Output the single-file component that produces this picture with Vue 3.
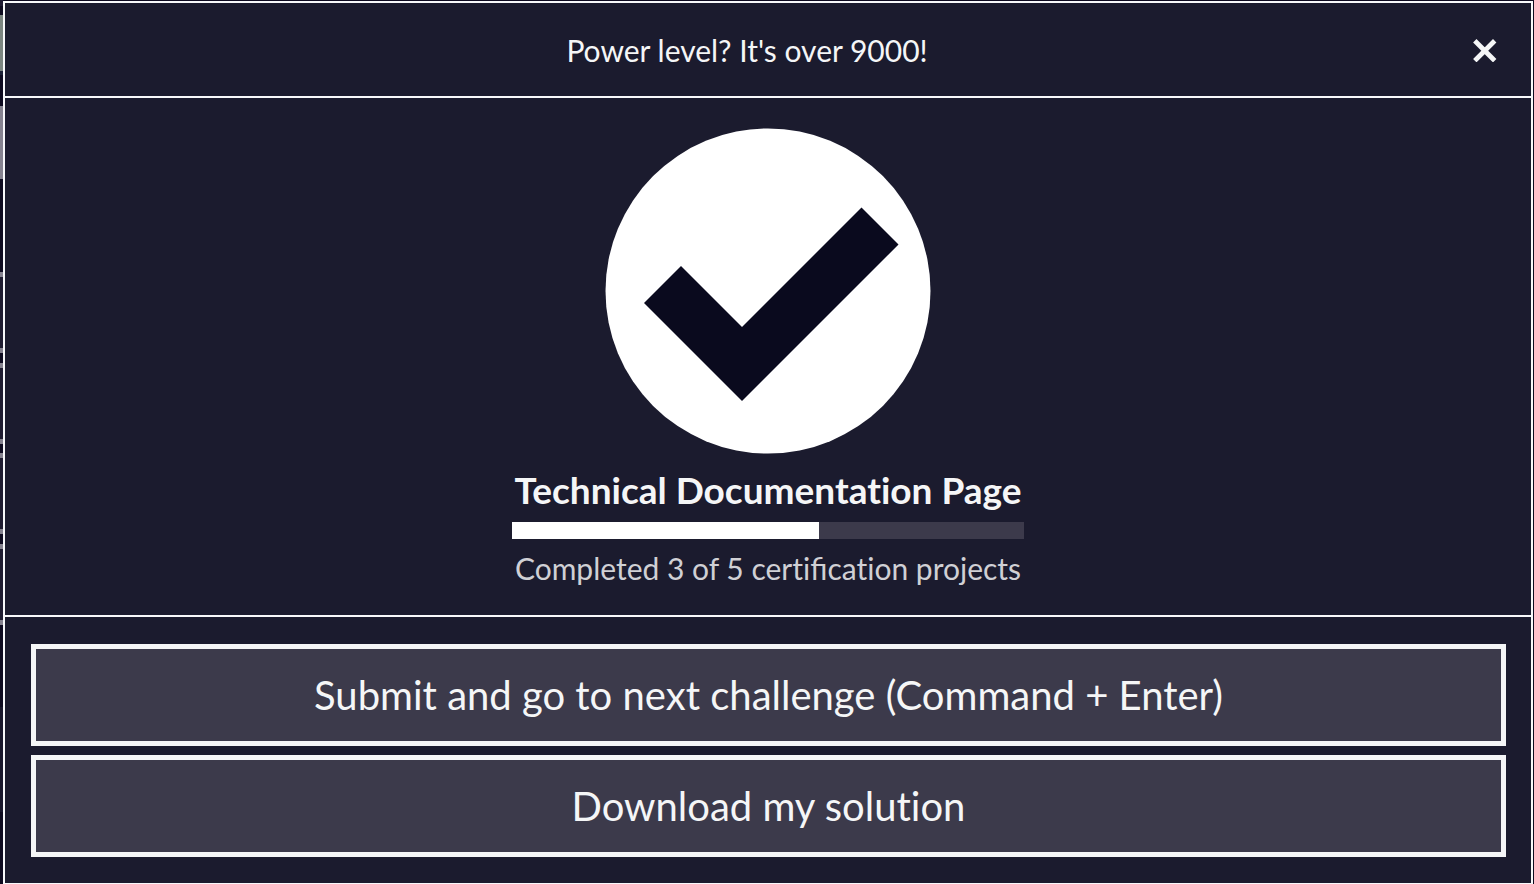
<script setup>
const completed = 3
const total = 5
</script>

<template>
  <div class="page">
    <section class="modal" role="dialog" aria-labelledby="modal-title">
      <header class="header">
        <h2 id="modal-title" class="title">Power level? It's over 9000!</h2>
        <button class="close" type="button" aria-label="Close">
          <svg viewBox="0 0 24 24" width="24" height="24" aria-hidden="true">
            <path d="M3.500 4.500 20 21M20 4.500 3.500 21" fill="none" stroke="#f5f6f7" stroke-width="4.800" stroke-linecap="square" />
          </svg>
        </button>
      </header>
      <div class="body">
        <svg class="badge" viewBox="0 0 326 326" aria-hidden="true">
          <circle cx="163" cy="163" r="162.5" fill="#fff" />
          <path d="M39 175 76 138 137 199 256.500 79.500 293.500 116.500 137 273Z" fill="#0a0a1e" />
        </svg>
        <div class="progress">
          <h3 class="challenge">Technical Documentation Page</h3>
          <div class="track">
            <div class="fill" :style="{ width: (completed / total) * 100 + '%' }"></div>
          </div>
          <p class="status">Completed {{ completed }} of {{ total }} certi<span class="ligature">fi</span>cation projects</p>
        </div>
      </div>
      <footer class="footer">
        <button class="action" type="button">Submit and go to next challenge (Command + Enter)</button>
        <button class="action" type="button">Download my solution</button>
      </footer>
    </section>
  </div>
</template>

<style>
body {
  background: #0e0b20;
}
</style>

<style scoped>
.page {
  box-sizing: border-box;
  height: 100vh;
  overflow: hidden;
  padding: 1px 1px 0 3px;
  font-family: Lato, "Liberation Sans", sans-serif;
  font-variant-ligatures: none;
  color: #f5f6f7;
  /* dimmed page showing along the dialog's edges */
  background: linear-gradient(
    #1f1b33 0 6px, #0e0b20 6px 15px, #7b8580 15px 71px, #1b2036 71px 75px,
    #0e0b20 75px 106px, #85828f 106px 179px, #0e0b20 179px 272px,
    #85828f 272px 277px, #1f1c31 277px 348px, #85828f 348px 353px,
    #0e0b20 353px 363px, #85828f 363px 368px, #1f1c31 368px 439px,
    #85828f 439px 444px, #0e0b20 444px 453px, #85828f 453px 458px,
    #1f1c31 458px 529px, #85828f 529px 534px, #0e0b20 534px 544px,
    #85828f 544px 549px, #1f1c31 549px 620px, #85828f 620px 625px,
    #0e0b20 625px 707px, #19172c 707px 812px, #0e0b20 812px
  ) left / 3px 100% no-repeat;
}
.modal {
  border: 2px solid #f8f9fb;
  background: #1b1b2e;
}
.header {
  display: flex;
  align-items: center;
  height: 93px;
  padding: 0 25px;
  border-bottom: 2px solid #f8f9fb;
}
.title {
  flex: 1;
  margin: 0;
  font-size: 30px;
  line-height: 44px;
  font-weight: 400;
  text-align: center;
}
.close {
  display: flex;
  justify-content: center;
  width: 42px;
  padding: 0;
  border: 0;
  background: none;
}
.body {
  display: flex;
  flex-direction: column;
  align-items: center;
  padding: 30px 30px 25px;
  border-bottom: 2px solid #f8f9fb;
}
.badge {
  width: 326px;
  height: 326px;
}
.progress {
  width: 512px;
}
.challenge {
  margin: 11px 0 7px;
  font-size: 37px;
  line-height: 50px;
  font-weight: 700;
  text-align: center;
  white-space: nowrap;
}
.track {
  height: 17px;
  background: #3c3a4b;
}
.fill {
  height: 100%;
  background: #fff;
}
.status {
  margin: 7px 0 0;
  font-size: 30px;
  line-height: 44px;
  text-align: center;
  color: #d0d0d5;
  white-space: nowrap;
}
.ligature {
  font-variant-ligatures: common-ligatures;
}
.footer {
  display: flex;
  flex-direction: column;
  gap: 9px;
  padding: 27px 25px 26px 26px;
}
.action {
  padding: 16px;
  border: 5px solid #f5f6f7;
  background: #3c3a4b;
  color: #f5f6f7;
  font-family: inherit;
  font-variant-ligatures: none;
  font-size: 40px;
  line-height: 60px;
}
</style>
